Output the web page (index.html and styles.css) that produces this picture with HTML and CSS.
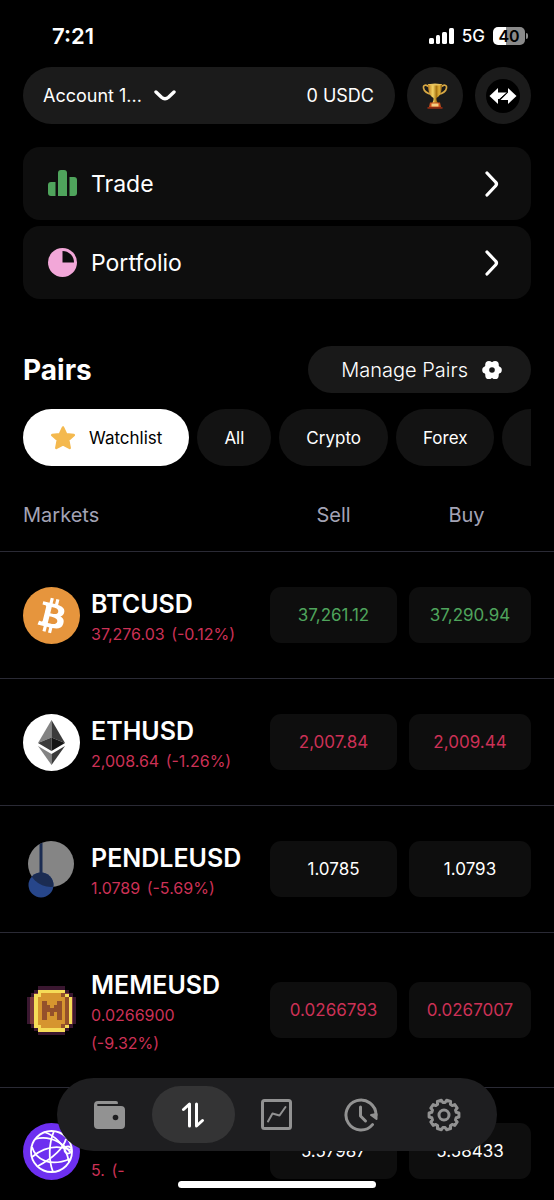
FILE: index.html
```html
<!DOCTYPE html>
<html lang="en">
<head>
    <meta charset="UTF-8">
    <meta name="viewport" content="width=device-width, initial-scale=1.0">
    <title>Pairs</title>
    <link rel="stylesheet" href="styles.css">
</head>
<body>
    <div class="app">
        <header class="status-bar">
            <span class="status-time">7:21</span>
            <div class="status-right">
                <svg width="25" height="16" viewBox="0 0 25 16" fill="#fff" aria-hidden="true">
                    <rect x="0" y="10" width="5" height="6" rx="1.5"/>
                    <rect x="7" y="7" width="4" height="9" rx="1.5"/>
                    <rect x="13" y="4" width="5" height="12" rx="1.5"/>
                    <rect x="20" y="0" width="5" height="16" rx="1.5"/>
                </svg>
                <span class="network">5G</span>
                <span class="battery">40</span>
            </div>
        </header>

        <main>
            <div class="top-row">
                <button type="button" class="account">
                    <span>Account 1...</span>
                    <svg width="22" height="12" viewBox="0 0 22 12" fill="none" stroke="#fff" stroke-width="3.4" stroke-linecap="round" aria-hidden="true">
                        <path d="M2 2l5.500 5.200q3.500 3 7 0L20 2"/>
                    </svg>
                    <span class="balance">0 USDC</span>
                </button>
                <button type="button" class="round-btn" aria-label="Leaderboard">
                    <svg width="26" height="26" viewBox="0 0 26 26" aria-hidden="true">
                        <defs>
                            <linearGradient id="gold">
                                <stop offset="0" stop-color="#b8791c"/>
                                <stop offset=".35" stop-color="#f5d565"/>
                                <stop offset=".6" stop-color="#a87512"/>
                                <stop offset=".8" stop-color="#e5b53a"/>
                                <stop offset="1" stop-color="#8a5a10"/>
                            </linearGradient>
                        </defs>
                        <g fill="none" stroke="#d9a944" stroke-width="1.6">
                            <path d="M7 4C4 1 1 2 1.500 5c.5 3 4 5.500 8.500 6.500"/>
                            <path d="M19 4c3-3 6-2 5.500 1-.5 3-4 5.500-8.500 6.500"/>
                        </g>
                        <path d="M6 1h14c0 7-1.500 12-5.500 14v2l1.500 4h-6l1.500-4v-2C7.500 13 6 8 6 1z" fill="url(#gold)"/>
                        <ellipse cx="13" cy="1.600" rx="7" ry="1" fill="#e8c35c"/>
                        <path d="M8 19.500h10l1 4.500H7z" fill="#c9501c"/>
                        <path d="M9.500 20.500h7v3h-7z" fill="#f3cf83"/>
                        <path d="M5.500 24h15v1.800h-15z" fill="#8c2c14"/>
                    </svg>
                </button>
                <button type="button" class="round-btn" aria-label="Swap">
                    <svg width="34" height="34" viewBox="0 0 34 34" aria-hidden="true">
                        <circle cx="17" cy="17" r="17" fill="#000"/>
                        <path d="M3.500 17L12 9v4.500h9L13.500 20H12v5z" fill="#fff"/>
                        <path d="M30.500 17L22 9v4.500L14.500 21H22v4z" fill="#fff"/>
                        <path d="M21.500 13.300L13.500 20.300" stroke="#000" stroke-width="1"/>
                    </svg>
                </button>
            </div>

            <nav class="menu">
                <a class="menu-link" href="#trade">
                    <svg width="29" height="27" viewBox="0 0 29 27" fill="#4fa45c" aria-hidden="true">
                        <path d="M3 12h4.500v14H3a3 3 0 0 1-3-3v-8a3 3 0 0 1 3-3z"/>
                        <path d="M13 0h3a3 3 0 0 1 3 3v23h-9V3a3 3 0 0 1 3-3z"/>
                        <path d="M21.500 7H26a3 3 0 0 1 3 3v13a3 3 0 0 1-3 3h-4.500z"/>
                    </svg>
                    <span>Trade</span>
                    <svg class="arrow" width="14" height="26" viewBox="0 0 14 26" fill="none" stroke="#fff" stroke-width="3.200" stroke-linecap="round" aria-hidden="true"><path d="M2 2l8.500 9q2 2 0 4L2 24"/></svg>
                </a>
                <a class="menu-link" href="#portfolio">
                    <svg width="29" height="29" viewBox="0 0 29 29" aria-hidden="true">
                        <circle cx="14.500" cy="14.500" r="14.500" fill="#f2a7d8"/>
                        <path d="M14.500 3v11.500H26A11.500 11.500 0 0 0 14.500 3z" fill="#0e0e0e"/>
                    </svg>
                    <span>Portfolio</span>
                    <svg class="arrow" width="14" height="26" viewBox="0 0 14 26" fill="none" stroke="#fff" stroke-width="3.200" stroke-linecap="round" aria-hidden="true"><path d="M2 2l8.500 9q2 2 0 4L2 24"/></svg>
                </a>
            </nav>

            <div class="pairs-header">
                <h1>Pairs</h1>
                <button type="button" class="manage-btn">
                    Manage Pairs
                    <svg width="20" height="20" viewBox="0 0 20 20" aria-hidden="true">
                        <g fill="#fff">
                            <circle cx="10" cy="10" r="8"/>
                            <circle cx="3.800" cy="10" r="3.600"/>
                            <circle cx="16.200" cy="10" r="3.600"/>
                            <circle cx="6.900" cy="4.600" r="3.600"/>
                            <circle cx="13.100" cy="4.600" r="3.600"/>
                            <circle cx="6.900" cy="15.400" r="3.600"/>
                            <circle cx="13.100" cy="15.400" r="3.600"/>
                        </g>
                        <circle cx="10" cy="10" r="2.800" fill="#191919"/>
                    </svg>
                </button>
            </div>

            <div class="tabs">
                <button type="button" class="tab active">
                    <svg width="26" height="26" viewBox="0 0 26 26" fill="#f4b94f" stroke="#f4b94f" stroke-width="2.500" stroke-linejoin="round" aria-hidden="true">
                        <path d="M13 2.500l3.200 6.700 7.600.9-5.600 5 1.500 7.900-6.700-3.500L6.300 23l1.500-7.900-5.600-5 7.600-.9z"/>
                    </svg>
                    Watchlist
                </button>
                <button type="button" class="tab">All</button>
                <button type="button" class="tab">Crypto</button>
                <button type="button" class="tab">Forex</button>
                <button type="button" class="tab" aria-label="More"></button>
            </div>

            <table class="markets">
                <thead>
                    <tr>
                        <th>Markets</th>
                        <th class="col-sell">Sell</th>
                        <th class="col-buy">Buy</th>
                    </tr>
                </thead>
                <tbody>
                    <tr>
                        <td>
                            <div class="pair">
                                <svg width="57" height="57" viewBox="0 0 32 32" aria-hidden="true">
                                    <circle cx="16" cy="16" r="16" fill="#e6953d"/>
                                    <path fill="#fff" d="M23.189 14.020c.314-2.096-1.283-3.223-3.465-3.975l.708-2.840-1.728-.43-.690 2.765c-.454-.114-.920-.220-1.385-.326l.695-2.783L15.596 6l-.708 2.839c-.376-.086-.746-.170-1.104-.260l.002-.009-2.384-.595-.460 1.846s1.283.294 1.256.312c.700.175.826.638.805 1.006l-.806 3.235c.048.012.110.030.180.057l-.183-.045-1.130 4.532c-.086.212-.303.531-.793.410.018.025-1.256-.313-1.256-.313l-.858 1.978 2.250.561c.418.105.828.215 1.231.318l-.715 2.872 1.727.430.708-2.840c.472.127.930.245 1.378.357l-.706 2.828 1.728.430.715-2.866c2.948.558 5.164.333 6.097-2.333.752-2.146-.037-3.385-1.588-4.192 1.130-.260 1.980-1.003 2.207-2.538zm-3.950 5.538c-.533 2.147-4.148.986-5.320.695l.950-3.805c1.172.293 4.929.872 4.370 3.110zm.535-5.569c-.487 1.953-3.495.960-4.470.717l.860-3.450c.975.243 4.118.696 3.610 2.733z"/>
                                </svg>
                                <div class="pair-info">
                                    <div class="symbol">BTCUSD</div>
                                    <div class="change"><span>37,276.03</span> <span>(-0.12%)</span></div>
                                </div>
                            </div>
                        </td>
                        <td class="col-sell"><button type="button" class="price up">37,261.12</button></td>
                        <td class="col-buy"><button type="button" class="price up">37,290.94</button></td>
                    </tr>
                    <tr>
                        <td>
                            <div class="pair">
                                <svg width="57" height="57" viewBox="0 0 57 57" aria-hidden="true">
                                    <circle cx="28.500" cy="28.500" r="28.500" fill="#fff"/>
                                    <path d="M28.500 6L15 29l13.500-5.500z" fill="#838383"/>
                                    <path d="M28.500 6L42 29l-13.500-5.500z" fill="#3b3b3b"/>
                                    <path d="M15 29l13.500-5.500V37z" fill="#3b3b3b"/>
                                    <path d="M42 29l-13.500-5.500V37z" fill="#151515"/>
                                    <path d="M15 32l13.500 19V40z" fill="#838383"/>
                                    <path d="M42 32L28.500 51V40z" fill="#3b3b3b"/>
                                </svg>
                                <div class="pair-info">
                                    <div class="symbol">ETHUSD</div>
                                    <div class="change"><span>2,008.64</span> <span>(-1.26%)</span></div>
                                </div>
                            </div>
                        </td>
                        <td class="col-sell"><button type="button" class="price down">2,007.84</button></td>
                        <td class="col-buy"><button type="button" class="price down">2,009.44</button></td>
                    </tr>
                    <tr>
                        <td>
                            <div class="pair">
                                <svg width="57" height="57" viewBox="0 0 57 57" aria-hidden="true">
                                    <clipPath id="disc"><circle cx="28" cy="23" r="23"/></clipPath>
                                    <circle cx="28" cy="23" r="23" fill="#858585"/>
                                    <circle cx="18" cy="44" r="12.500" fill="#27468a"/>
                                    <g clip-path="url(#disc)" fill="#1b2c52">
                                        <circle cx="18" cy="44" r="12.500"/>
                                        <path d="M16.500 0h3v34h-3z"/>
                                    </g>
                                </svg>
                                <div class="pair-info">
                                    <div class="symbol">PENDLEUSD</div>
                                    <div class="change"><span>1.0789</span> <span>(-5.69%)</span></div>
                                </div>
                            </div>
                        </td>
                        <td class="col-sell"><button type="button" class="price">1.0785</button></td>
                        <td class="col-buy"><button type="button" class="price">1.0793</button></td>
                    </tr>
                    <tr>
                        <td>
                            <div class="pair">
                                <svg width="57" height="57" viewBox="0 0 57 57" shape-rendering="crispEdges" aria-hidden="true">
                                    <path d="M15 4h27v49H15zM11 8h35v41H11zM8 11h42v35H8zM4 15h49v27H4z" fill="#3a1730"/>
                                    <path d="M7 15h43v27H7zM11 11h35v35H11z" fill="#7d3a3c"/>
                                    <path d="M15 8h27v42H15zM11 12h35v34H11zM11 15h38v27H11z" fill="#f5dc58"/>
                                    <path d="M18 11h24v35H18zM15 15h27v28H15z" fill="#d6952f"/>
                                    <path d="M42 15h4v28h-4zM38 11h4v4h-4zM38 42h4v4h-4z" fill="#94502b"/>
                                    <path d="M19 19h5v4h3v3h4v-3h3v-4h5v19h-5v-8h-3v4h-4v-4h-3v8h-5z" fill="#94502b"/>
                                </svg>
                                <div class="pair-info">
                                    <div class="symbol">MEMEUSD</div>
                                    <div class="change"><span>0.0266900</span> <span>(-9.32%)</span></div>
                                </div>
                            </div>
                        </td>
                        <td class="col-sell"><button type="button" class="price down">0.0266793</button></td>
                        <td class="col-buy"><button type="button" class="price down">0.0267007</button></td>
                    </tr>
                    <tr>
                        <td>
                            <div class="pair">
                                <svg width="57" height="57" viewBox="0 0 57 57" aria-hidden="true">
                                    <circle cx="28.500" cy="28.500" r="28.500" fill="#6d2ff0"/>
                                    <g fill="none" stroke="#fff" stroke-width="1.800">
                                        <circle cx="28.500" cy="28.500" r="20.500"/>
                                        <path d="M12 16c12-3 25 1 36 14"/>
                                        <path d="M31 8c-5 12-6 28-1 41"/>
                                        <path d="M15 43c13-7 25-17 28-27"/>
                                        <path d="M9 24c4 13 18 20 38 12"/>
                                        <path d="M21 9c10 3 22 13 25 30"/>
                                        <path d="M9 34c12-10 26-12 39-7"/>
                                        <circle cx="45" cy="27" r="3.500"/>
                                    </g>
                                </svg>
                                <div class="pair-info">
                                    <div class="symbol"></div>
                                    <div class="change"><span>5.</span> <span>(-</span></div>
                                </div>
                            </div>
                        </td>
                        <td class="col-sell"><button type="button" class="price">5.57987</button></td>
                        <td class="col-buy"><button type="button" class="price">5.58433</button></td>
                    </tr>
                </tbody>
            </table>
        </main>

        <nav class="bottom-nav">
            <a class="nav-item" href="#wallet" aria-label="Wallet">
                <svg width="31" height="28" viewBox="0 0 31 28" aria-hidden="true">
                    <path d="M4 0h18q2 0 2 2t-2 2v1h5a4 4 0 0 1 4 4v15a4 4 0 0 1-4 4H4a4 4 0 0 1-4-4V4a4 4 0 0 1 4-4z" fill="#929292"/>
                    <path d="M4 4h20" stroke="#1e1e20" stroke-width="1.800" stroke-linecap="round"/>
                    <circle cx="21.500" cy="16.500" r="2.800" fill="#1e1e20"/>
                </svg>
            </a>
            <a class="nav-item active" href="#trade" aria-label="Trade">
                <svg width="24" height="26" viewBox="0 0 24 26" fill="none" stroke="#fff" stroke-width="3" stroke-linecap="round" stroke-linejoin="round" aria-hidden="true">
                    <path d="M2.500 7.500L8.500 2v22"/>
                    <path d="M15.500 2v22l6-5.500"/>
                </svg>
            </a>
            <a class="nav-item" href="#chart" aria-label="Chart">
                <svg width="31" height="31" viewBox="0 0 31 31" fill="none" stroke="#929292" stroke-linecap="round" stroke-linejoin="round" aria-hidden="true">
                    <rect x="1.500" y="1.500" width="28" height="28" rx="2" stroke-width="3"/>
                    <path d="M7 22.500l4.500-8 7 2L24.500 8" stroke-width="2"/>
                </svg>
            </a>
            <a class="nav-item" href="#history" aria-label="History">
                <svg width="34" height="34" viewBox="0 0 34 34" fill="none" stroke="#929292" stroke-width="3" stroke-linecap="round" stroke-linejoin="round" aria-hidden="true">
                    <path d="M28.500 26.600A15 15 0 1 1 32 17"/>
                    <path d="M32.500 16v5L27 17z" fill="#929292" stroke-width="2"/>
                    <path d="M16.500 9v9l5 5"/>
                </svg>
            </a>
            <a class="nav-item" href="#settings" aria-label="Settings">
                <svg width="34" height="34" viewBox="0 0 34 34" fill="none" stroke="#929292" stroke-width="3" stroke-linejoin="round" aria-hidden="true">
                    <circle cx="17" cy="17" r="5"/>
                    <path d="M18.100 4.500L19.600 2.200 23.600 3.500 23.400 6.300 25.200 7.600 27.800 6.600 30.200 10 28.500 12.100 29.200 14.200 31.900 14.900 31.900 19.100 29.200 19.800 28.500 21.900 30.200 24 27.800 27.400 25.200 26.400 23.400 27.700 23.600 30.500 19.600 31.800 18.100 29.500 15.900 29.500 14.400 31.800 10.400 30.500 10.600 27.700 8.800 26.400 6.200 27.400 3.800 24 5.500 21.900 4.800 19.800 2.100 19.100 2.100 14.900 4.800 14.200 5.500 12.100 3.800 10 6.200 6.600 8.800 7.600 10.600 6.300 10.400 3.500 14.400 2.200 15.900 4.500z"/>
                </svg>
            </a>
        </nav>
        <div class="home-indicator"></div>
    </div>
</body>
</html>
```
FILE: styles.css
```css
* {
    margin: 0;
    padding: 0;
    box-sizing: border-box;
    font-family: Inter, 'Liberation Sans', sans-serif;
}

body {
    background-color: #000;
    color: #fff;
}

button {
    border: none;
    color: #fff;
    cursor: pointer;
}

a {
    color: #fff;
    text-decoration: none;
}

svg {
    display: block;
    flex-shrink: 0;
}

.app {
    height: 100vh;
    overflow: hidden;
}

.status-bar {
    display: flex;
    justify-content: space-between;
    align-items: center;
    height: 67px;
    padding: 4px 29px 0 52px;
}

.status-time {
    font-size: 22px;
    font-weight: 600;
}

.status-right {
    display: flex;
    align-items: center;
    gap: 8px;
}

.network {
    font-size: 17px;
    font-weight: 500;
}

.battery {
    position: relative;
    width: 32px;
    border-radius: 5px;
    background: linear-gradient(to right, #fff 40%, #8a8a8a 40%);
    color: #000;
    font-size: 16px;
    font-weight: 600;
    line-height: 18px;
    text-align: center;
}

.battery::after {
    content: "";
    position: absolute;
    left: 33px;
    top: 6px;
    width: 2px;
    height: 6px;
    border-radius: 0 2px 2px 0;
    background-color: #8a8a8a;
}

.top-row {
    display: flex;
    gap: 12px;
    padding: 0 23px;
}

.account {
    display: flex;
    flex: 1;
    align-items: center;
    gap: 12px;
    height: 57px;
    padding: 0 21px 0 20px;
    border-radius: 29px;
    background-color: #1b1b1b;
    font-size: 18px;
}

.balance {
    margin-left: auto;
}

.round-btn {
    display: flex;
    justify-content: center;
    align-items: center;
    width: 56px;
    height: 57px;
    border-radius: 50%;
    background-color: #1b1b1b;
}

.menu {
    display: flex;
    flex-direction: column;
    gap: 6px;
    padding: 23px 23px 0;
}

.menu-link {
    display: flex;
    align-items: center;
    gap: 14px;
    height: 73px;
    padding: 0 32px 0 25px;
    border-radius: 17px;
    background-color: #0e0e0e;
    font-size: 23px;
}

.arrow {
    margin-left: auto;
}

.pairs-header {
    display: flex;
    justify-content: space-between;
    align-items: center;
    padding: 47px 23px 16px;
}

.pairs-header h1 {
    font-size: 28px;
    font-weight: 700;
}

.manage-btn {
    display: flex;
    align-items: center;
    gap: 14px;
    height: 47px;
    padding: 0 29px 0 33px;
    border-radius: 24px;
    background-color: #191919;
    font-size: 20px;
    font-weight: 300;
}

.tabs {
    display: flex;
    gap: 8px;
    margin: 0 23px;
    overflow: hidden;
}

.tab {
    display: flex;
    flex-shrink: 0;
    align-items: center;
    gap: 13px;
    height: 57px;
    min-width: 73px;
    padding: 0 27px;
    border-radius: 29px;
    background-color: #131313;
    font-size: 17px;
}

.tab.active {
    background-color: #fff;
    color: #000;
}

.markets {
    width: 100%;
    margin-top: 37px;
    border-collapse: collapse;
    table-layout: fixed;
}

.markets th {
    padding-bottom: 24px;
    color: #a3a3b5;
    font-size: 20px;
    font-weight: 400;
    line-height: 24px;
}

.markets th:first-child {
    text-align: left;
}

.markets th:first-child,
.markets td:first-child {
    padding-left: 23px;
    padding-right: 28px;
}

.markets tbody tr {
    border-top: 1px solid #2a2a35;
}

.markets td {
    padding: 30px 0;
}

.markets .col-sell {
    width: 139px;
    padding-right: 12px;
}

.markets .col-buy {
    width: 145px;
    padding-right: 23px;
}

.markets th.col-buy {
    padding-right: 30px;
}

.pair {
    display: flex;
    align-items: center;
    gap: 11px;
}

.pair-info {
    padding-top: 6px;
}

.symbol {
    min-height: 32px;
    font-size: 25px;
    font-weight: 600;
    line-height: 32px;
}

.change {
    color: #cc3156;
    font-size: 16px;
    line-height: 28px;
}

.change span {
    display: inline-block;
    margin-right: 2px;
}

.price {
    width: 100%;
    height: 56px;
    border-radius: 11px;
    background-color: #0e0e0e;
    font-size: 17px;
}

.price.up {
    color: #4fa45c;
}

.price.down {
    color: #cc3156;
}

.bottom-nav {
    position: fixed;
    left: 57px;
    right: 57px;
    bottom: 49px;
    display: flex;
    padding: 8px 11px;
    border-radius: 37px;
    background-color: #1e1e20;
}

.nav-item {
    display: flex;
    flex: 1;
    justify-content: center;
    align-items: center;
    height: 57px;
    border-radius: 29px;
}

.nav-item.active {
    background-color: #343435;
}

.home-indicator {
    position: fixed;
    left: 50%;
    bottom: 12px;
    width: 198px;
    height: 7px;
    margin-left: -99px;
    border-radius: 4px;
    background-color: #fff;
}
```
